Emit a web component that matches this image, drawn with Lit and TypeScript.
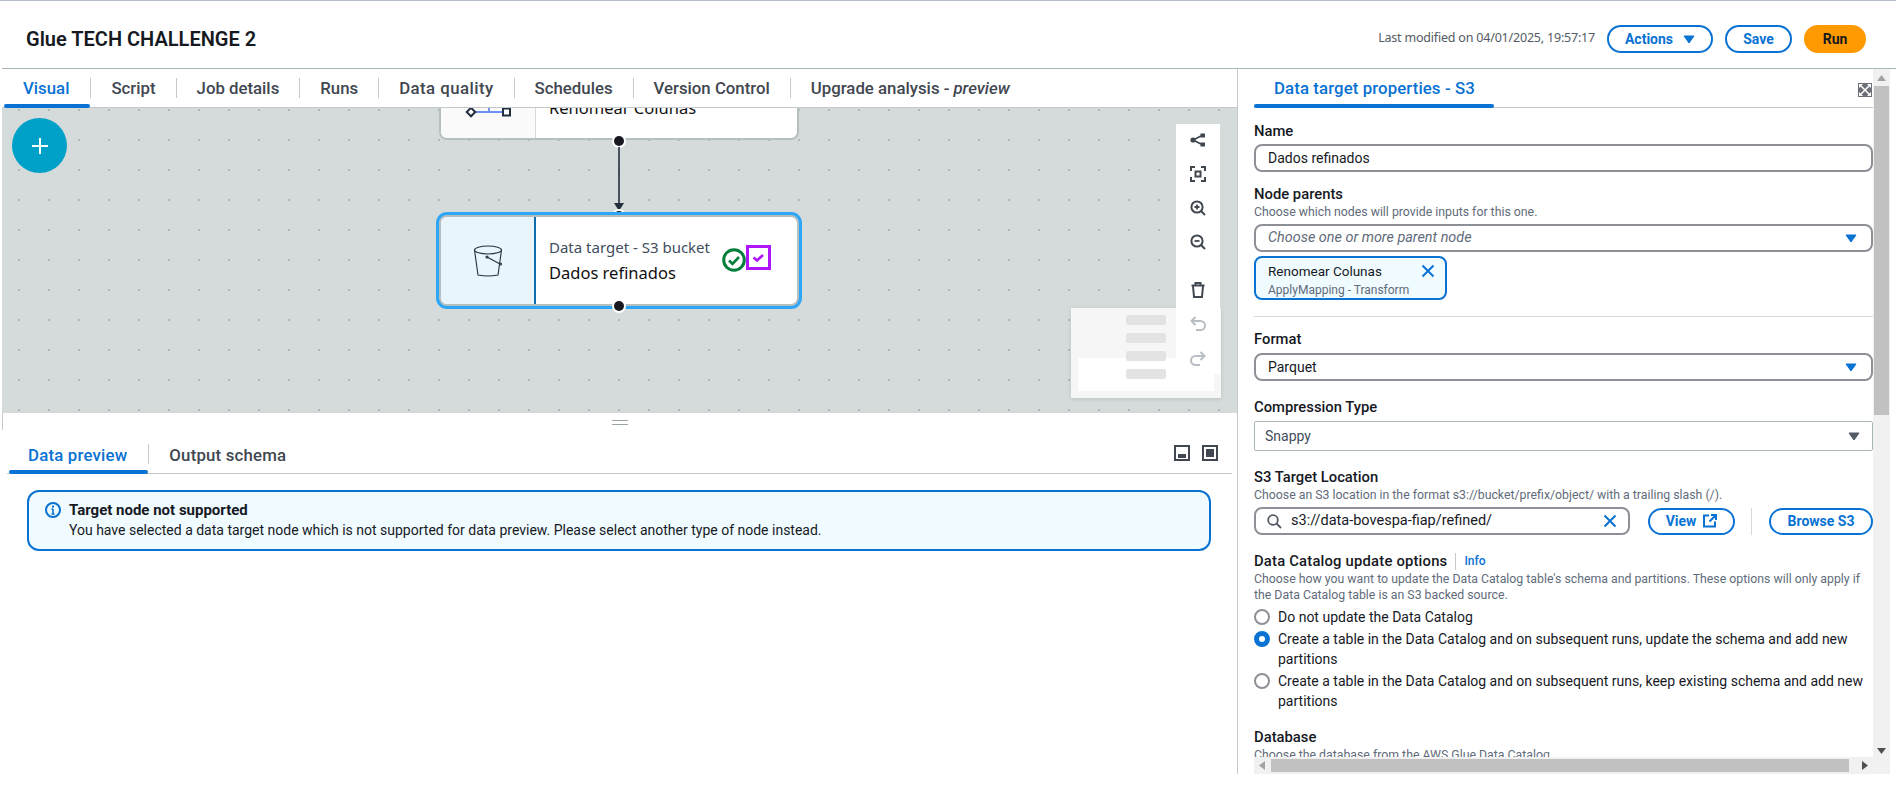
import { LitElement, css, html, svg } from "lit";
import { customElement } from "lit/decorators.js";

const caret = (color: string) => html`<svg class="caret" width="12" height="9" viewBox="0 0 12 9"><path d="M1 1h10L6 8z" fill=${color} stroke=${color} stroke-linejoin="round"/></svg>`;
const cross = (size = 14) => html`<svg width=${size} height=${size} viewBox="0 0 14 14"><path d="M1.5 1.5l11 11M12.5 1.5l-11 11" stroke="#0972d3" stroke-width="2" fill="none"/></svg>`;

const toolIcons = [
  svg`<circle cx="3" cy="8" r="2.6" fill="#414750"/><rect x="10.500" y="1.500" width="4.500" height="4" fill="#414750"/><rect x="10.500" y="10.500" width="4.500" height="4" fill="#414750"/><path d="M3 8l9-4.500M3 8l9 4.500" stroke="#414750" stroke-width="1.800"/>`,
  svg`<path d="M1 5V1h4M11 1h4v4M15 11v4h-4M5 15H1v-4" fill="none" stroke="#414750" stroke-width="2"/><rect x="5.500" y="5.500" width="5" height="5" fill="none" stroke="#414750" stroke-width="2"/>`,
  svg`<circle cx="7" cy="7" r="5.600" fill="none" stroke="#414750" stroke-width="2"/><path d="M11 11l4 4" stroke="#414750" stroke-width="2"/><path d="M4.500 7h5M7 4.500v5" stroke="#414750" stroke-width="1.800"/>`,
  svg`<circle cx="7" cy="7" r="5.600" fill="none" stroke="#414750" stroke-width="2"/><path d="M11 11l4 4" stroke="#414750" stroke-width="2"/><path d="M4.500 7h5" stroke="#414750" stroke-width="1.800"/>`,
  svg`<path d="M1.500 3.500h13M5.500 3V1h5v2M3 4l1 11h8l1-11" fill="none" stroke="#414750" stroke-width="2"/>`,
  svg`<path d="M5.500 1L1.500 5l4 4M2 5h8.500a4 4 0 0 1 0 9H6" fill="none" stroke="#b9bec4" stroke-width="2"/>`,
  svg`<path d="M10.500 2l4 4-4 4M14 6H5.500a4 4 0 0 0 0 9H10" fill="none" stroke="#b9bec4" stroke-width="2"/>`,
];

@customElement("app-root")
export class AppRoot extends LitElement {
  static styles = css`
    :host {
      display: block;
      width: 1896px;
      height: 792px;
      overflow: hidden;
      background: #fff;
      color: #16191f;
      font-family: Roboto, sans-serif;
      font-size: 14px;
      line-height: 20px;
    }
    * {
      box-sizing: border-box;
    }
    .page {
      height: 792px;
      border-top: 1px solid #b6bec9;
      padding-left: 2px;
      display: flex;
      flex-direction: column;
    }
    .header {
      height: 68px;
      flex: none;
      border-bottom: 1px solid #aab7b8;
      display: flex;
      align-items: center;
      padding: 9px 30px 0 24px;
    }
    .title {
      font-size: 20px;
      font-weight: 600;
      flex: 1;
    }
    .modified {
      font-family: "Noto Sans", sans-serif;
      font-size: 12.500px;
      letter-spacing: -0.2px;
      color: #545b64;
      margin: -3px 12px 0 0;
    }
    .btn {
      display: inline-flex;
      align-items: center;
      justify-content: center;
      gap: 10px;
      height: 28px;
      border: 2px solid #0972d3;
      border-radius: 14px;
      background: #fff;
      color: #0972d3;
      font-weight: 700;
      font-size: 14px;
    }
    .btn-actions {
      width: 106px;
    }
    .btn-save {
      width: 67px;
      margin-left: 12px;
    }
    .btn-run {
      width: 62px;
      margin-left: 12px;
      background: #ff9900;
      border-color: #ff9900;
      color: #16191f;
    }
    .main {
      flex: 1;
      display: flex;
      min-height: 0;
    }
    .left {
      width: 1235px;
      flex: none;
      display: flex;
      flex-direction: column;
    }
    .tabs {
      display: flex;
      flex: none;
      height: 39px;
      border-bottom: 1px solid #c4c9cc;
      font-weight: 500;
      font-size: 16.800px;
      color: #414750;
    }
    .tab {
      position: relative;
      height: 38px;
      padding: 0 20px 0 21px;
      display: flex;
      align-items: center;
      white-space: nowrap;
    }
    .tab:first-child {
      padding-right: 21px;
    }
    .tab.spaced {
      letter-spacing: 0.45px;
    }
    .tab i {
      font-weight: 500;
      margin-left: 4px;
    }
    .tab + .tab::before {
      content: "";
      position: absolute;
      left: 0;
      top: 9px;
      height: 20px;
      width: 1px;
      background: #c4c9cc;
    }
    .tab.active {
      color: #0972d3;
    }
    .tab.active::after {
      content: "";
      position: absolute;
      left: 2px;
      right: 0;
      bottom: -1px;
      height: 4px;
      border-radius: 2px;
      background: #0972d3;
    }
    .canvas {
      position: relative;
      height: 305px;
      flex: none;
      overflow: hidden;
      background-color: #d5dbdb;
      background-image: radial-gradient(circle, #aeb8b8 0.7px, transparent 1px);
      background-size: 30px 30px;
      background-position: 2px -13px;
    }
    .fab {
      position: absolute;
      left: 10px;
      top: 10px;
      width: 55px;
      height: 55px;
      border-radius: 50%;
      background: #00a1c9;
      display: flex;
      align-items: center;
      justify-content: center;
    }
    .node {
      position: absolute;
      left: 437px;
      width: 360px;
      height: 91px;
      display: flex;
      background: #fff;
      border: 2px solid #b5bfc0;
      border-radius: 8px;
      overflow: hidden;
      font-family: "Noto Sans", sans-serif;
    }
    .node.upper {
      top: -59px;
    }
    .node.selected {
      top: 107px;
      box-shadow: 0 0 0 3px #2ea6f8;
      overflow: visible;
    }
    .node-icon {
      width: 95px;
      flex: none;
      background: #fafafa;
      border-right: 1px solid #d5dbdb;
      position: relative;
    }
    .selected .node-icon {
      background: #e8f5fd;
      border-right: 2px solid #0f6cb0;
      border-radius: 6px 0 0 6px;
      display: flex;
      align-items: center;
      justify-content: center;
    }
    .node-body {
      padding: 20px 0 0 13px;
      white-space: nowrap;
    }
    .node-kind {
      font-size: 15px;
      color: #414d5c;
      line-height: 20px;
    }
    .node-name {
      font-size: 16.500px;
      line-height: 26px;
      margin-top: 3px;
      color: #111;
    }
    .upper .node-name {
      margin-top: 24px;
    }
    .badges {
      position: absolute;
      left: 281px;
      top: 31px;
      display: flex;
    }
    .port {
      position: absolute;
      left: 612px;
      width: 10px;
      height: 10px;
      border-radius: 50%;
      background: #16191f;
      box-shadow: 0 0 0 2px #fff;
    }
    .edge {
      position: absolute;
      left: 609px;
      top: 39px;
      width: 16px;
      height: 66px;
    }
    .toolbar {
      position: absolute;
      left: 1174px;
      top: 16px;
      width: 44px;
      height: 250px;
      background: #fff;
      padding-top: 8px;
      display: flex;
      flex-direction: column;
      align-items: center;
      z-index: 1;
    }
    .toolbar svg {
      display: block;
      flex: none;
      margin-bottom: 18px;
    }
    .toolbar svg:nth-child(5) {
      margin-top: 14px;
    }
    .minimap {
      position: absolute;
      left: 1069px;
      top: 200px;
      width: 150px;
      height: 90px;
      background: #f6f6f6;
      box-shadow: 0 1px 4px rgba(0, 0, 0, 0.12);
    }
    .minimap .view {
      position: absolute;
      left: 7px;
      right: 7px;
      top: 50px;
      bottom: 7px;
      background: #fff;
    }
    .minimap .bars {
      position: absolute;
      left: 55px;
      top: 7px;
      display: flex;
      flex-direction: column;
      gap: 8px;
    }
    .minimap .bars span {
      width: 40px;
      height: 10px;
      border-radius: 2px;
      background: #e3e3e3;
    }
    .lower {
      flex: 1;
      position: relative;
      padding: 24px 5px 0;
    }
    .lower::before {
      content: "";
      position: absolute;
      left: 0;
      top: 0;
      width: 1px;
      height: 17px;
      background: #c4c9cc;
    }
    .handle-h {
      position: absolute;
      left: 610px;
      top: 7px;
      width: 16px;
      height: 5px;
      border-top: 1px solid #9aa5a5;
      border-bottom: 1px solid #9aa5a5;
    }
    .lower-tabs {
      height: 37px;
      position: relative;
      letter-spacing: 0.2px;
    }
    .lower-tabs .tab {
      height: 36px;
    }
    .lower-tabs .tab + .tab::before {
      top: 7px;
    }
    .lower-tabs .tab.active::after {
      left: 2px;
    }
    .view-icons {
      margin-left: auto;
      display: flex;
      gap: 12px;
      align-items: center;
      padding: 0 14px 4px 0;
    }
    .alert {
      margin: 16px 21px 0 20px;
      height: 61px;
      border: 2px solid #0972d3;
      border-radius: 12px;
      background: #f0fbff;
      padding: 8px 16px 0 16px;
      display: flex;
      gap: 8px;
    }
    .alert svg {
      flex: none;
      margin-top: 2px;
    }
    .alert b {
      font-size: 15px;
      font-weight: 700;
      display: block;
    }
    .right {
      flex: none;
      width: 659px;
      height: 705px;
      border-left: 1px solid #c4c9cc;
      padding-right: 6px;
      display: grid;
      grid-template-columns: 1fr 17px;
      grid-template-rows: 688px 17px;
      align-content: start;
      min-width: 0;
    }
    .props {
      min-width: 0;
      overflow: hidden;
      padding-left: 16px;
    }
    .props-tabs {
      height: 39px;
      border-bottom: 1px solid #c4c9cc;
      display: flex;
      justify-content: space-between;
      font-weight: 500;
      font-size: 16.800px;
    }
    .props-tabs .tab {
      padding: 0 19px 0 20px;
      letter-spacing: 0.1px;
      color: #0972d3;
    }
    .props-tabs .tab.active::after {
      left: 0;
    }
    .expand {
      margin: 14px 1px 0 0;
    }
    .form {
      padding-top: 14px;
      height: 649px;
      overflow: hidden;
    }
    .field {
      margin-top: 13px;
    }
    .field:first-child {
      margin-top: 0;
    }
    .field.wide {
      margin-top: 17px;
    }
    .label {
      font-size: 14.800px;
      font-weight: 500;
      line-height: 18px;
      display: flex;
      align-items: center;
    }
    .label .long {
      letter-spacing: 0.2px;
    }
    .info {
      color: #0972d3;
      font-size: 12px;
      border-left: 1px solid #c4c9cc;
      margin-left: 8px;
      padding-left: 8px;
      height: 17px;
      line-height: 17px;
    }
    .desc {
      font-size: 12.300px;
      line-height: 16px;
      color: #5f6b7a;
      margin-top: 1px;
      padding-right: 8px;
    }
    .control {
      margin-top: 4px;
      height: 28px;
      border: 2px solid #8d9096;
      border-radius: 8px;
      padding: 0 14px 0 12px;
      display: flex;
      align-items: center;
      justify-content: space-between;
    }
    .control i {
      color: #5f6b7a;
      font-size: 14.400px;
    }
    .control.plain {
      margin-top: 5px;
      height: 30px;
      border: 1px solid #aab7b8;
      border-radius: 2px;
      padding: 0 12px 0 10px;
      color: #414d5c;
    }
    .token {
      margin-top: 4px;
      width: 193px;
      height: 44px;
      border: 2px solid #0972d3;
      border-radius: 8px;
      background: #f0fbff;
      padding: 3px 10px 0 12px;
      display: grid;
      grid-template-columns: 1fr auto;
      line-height: 20px;
    }
    .token span {
      font-size: 13.500px;
    }
    .token small {
      font-size: 12px;
      line-height: 16px;
      color: #5f6b7a;
      grid-column: 1 / 3;
    }
    .token svg {
      margin-top: 3px;
    }
    .divider {
      height: 1px;
      background: #d5dbdb;
      margin-top: 16px;
    }
    .s3-row {
      margin-top: 4px;
      display: flex;
      align-items: center;
    }
    .s3-row .control {
      margin-top: 0;
      width: 376px;
      padding: 0 11px 0 11px;
    }
    .s3-row .value {
      flex: 1;
      margin-left: 9px;
      font-size: 14.500px;
    }
    .s3-row .btn {
      height: 27px;
      gap: 7px;
    }
    .btn-view {
      width: 87px;
      margin-left: 18px;
    }
    .vsep {
      width: 1px;
      height: 27px;
      background: #d5dbdb;
      margin: 0 17px 0 16px;
    }
    .btn-browse {
      width: 104px;
    }
    .radios {
      margin-top: 4px;
      display: flex;
      flex-direction: column;
      gap: 2px;
    }
    .radio {
      display: flex;
      gap: 8px;
    }
    .dot {
      width: 16px;
      height: 16px;
      flex: none;
      margin-top: 2px;
      border-radius: 50%;
      border: 2px solid #8d9096;
    }
    .dot.on {
      border: 5px solid #0972d3;
    }
    .vscroll {
      grid-column: 2;
      grid-row: 1 / 3;
      background: #f1f1f1;
      display: flex;
      flex-direction: column;
      align-items: center;
      justify-content: space-between;
      padding: 6px 0 20px;
      position: relative;
    }
    .vscroll .thumb {
      position: absolute;
      left: 1px;
      top: 17px;
      width: 15px;
      height: 329px;
      background: #c1c1c1;
    }
    .hscroll {
      background: #f1f1f1;
      margin-left: 16px;
      display: flex;
      align-items: center;
      justify-content: space-between;
      padding: 0 5px 0 5px;
      position: relative;
    }
    .hscroll .thumb {
      position: absolute;
      left: 17px;
      top: 2px;
      width: 578px;
      height: 13px;
      background: #c1c1c1;
    }
  `;

  render() {
    return html`<div class="page">
      <div class="header">
        <div class="title">Glue TECH CHALLENGE 2</div>
        <div class="modified">Last modified on 04/01/2025, 19:57:17</div>
        <div class="btn btn-actions">Actions ${caret("#0972d3")}</div>
        <div class="btn btn-save">Save</div>
        <div class="btn btn-run">Run</div>
      </div>
      <div class="main">
        <div class="left">
          <div class="tabs">
            <div class="tab active">Visual</div>
            <div class="tab">Script</div>
            <div class="tab">Job details</div>
            <div class="tab">Runs</div>
            <div class="tab spaced">Data quality</div>
            <div class="tab">Schedules</div>
            <div class="tab">Version Control</div>
            <div class="tab">Upgrade analysis - <i>preview</i></div>
          </div>
          ${this.renderCanvas()}
          <div class="lower">
            <div class="handle-h"></div>
            <div class="tabs lower-tabs">
              <div class="tab active">Data preview</div>
              <div class="tab">Output schema</div>
              <div class="view-icons">
                <svg width="16" height="16" viewBox="0 0 16 16"><rect x="1" y="1" width="14" height="14" fill="none" stroke="#414750" stroke-width="2"/><rect x="4" y="9" width="8" height="4" fill="#414750"/></svg>
                <svg width="16" height="16" viewBox="0 0 16 16"><rect x="1" y="1" width="14" height="14" fill="none" stroke="#414750" stroke-width="2"/><rect x="4" y="4" width="8" height="8" fill="#414750"/></svg>
              </div>
            </div>
            <div class="alert">
              <svg width="16" height="16" viewBox="0 0 16 16"><circle cx="8" cy="8" r="7" fill="none" stroke="#0972d3" stroke-width="2"/><path d="M8 7v5M6.500 12h3M6.500 7H8" fill="none" stroke="#0972d3" stroke-width="1.600"/><rect x="7" y="3.600" width="2" height="2" fill="#0972d3"/></svg>
              <div>
                <b>Target node not supported</b>
                You have selected a data target node which is not supported for data preview. Please select another type of node instead.
              </div>
            </div>
          </div>
        </div>
        ${this.renderProps()}
      </div>
    </div>`;
  }

  renderCanvas() {
    return html`<div class="canvas">
      <div class="fab">
        <svg width="18" height="18" viewBox="0 0 18 18"><path d="M9 1v16M1 9h16" stroke="#fff" stroke-width="2"/></svg>
      </div>
      <div class="node upper">
        <div class="node-icon">
          <svg width="94" height="87" viewBox="0 0 94 87">
            <path d="M30 61h36M48 56v5" stroke="#6f8ff5" stroke-width="2" fill="none"/>
            <rect x="27" y="58" width="6" height="6" transform="rotate(45 30 61)" fill="#fff" stroke="#232f3e" stroke-width="2"/>
            <rect x="62" y="57.500" width="7" height="7" fill="#fff" stroke="#232f3e" stroke-width="2"/>
          </svg>
        </div>
        <div class="node-body"><div class="node-name">Renomear Colunas</div></div>
      </div>
      <div class="port" style="top:28px"></div>
      <svg class="edge" viewBox="0 0 16 66">
        <path d="M8 0v58" stroke="#232f3e" stroke-width="1.600"/>
        <path d="M3 56h10l-5 8z" fill="#232f3e"/>
      </svg>
      <div class="port" style="top:103px"></div>
      <div class="node selected">
        <div class="node-icon">
          <svg width="30" height="33" viewBox="0 0 30 33" fill="none" stroke="#232f3e" stroke-width="1.100">
            <ellipse cx="15" cy="6" rx="13.500" ry="4"/>
            <path d="M1.500 6l3.500 25q10 2 20 0l3.500-25"/>
            <path d="M14 13l13 7"/>
            <circle cx="14" cy="13" r="1"/>
            <circle cx="27.500" cy="20" r="1"/>
          </svg>
        </div>
        <div class="node-body">
          <div class="node-kind">Data target - S3 bucket</div>
          <div class="node-name">Dados refinados</div>
        </div>
        <div class="badges">
          <svg width="24" height="24" viewBox="0 0 24 24" fill="none"><circle cx="12" cy="12" r="10.300" stroke="#037f3b" stroke-width="3"/><path d="M7 12.500l3.500 3.500 6.500-7" stroke="#037f3b" stroke-width="2.600"/></svg>
          <svg width="25" height="25" viewBox="0 0 25 25" fill="none" style="margin-top:-3px"><rect x="1.500" y="1.500" width="22" height="22" stroke="#b014ff" stroke-width="3"/><path d="M7.500 12.500l3.500 3 6-5.500" stroke="#b014ff" stroke-width="2.600"/></svg>
        </div>
      </div>
      <div class="port" style="top:193px"></div>
      <div class="minimap">
        <div class="view"></div>
        <div class="bars"><span></span><span></span><span></span><span></span></div>
      </div>
      <div class="toolbar">
        ${toolIcons.map((icon) => html`<svg width="16" height="16" viewBox="0 0 16 16">${icon}</svg>`)}
      </div>
    </div>`;
  }

  renderProps() {
    return html`<div class="right">
      <div class="props">
        <div class="props-tabs">
          <div class="tab active">Data target properties - S3</div>
          <svg class="expand" width="14" height="14" viewBox="0 0 14 14"><rect width="14" height="14" fill="#6b7078"/><path d="M2 2l10 10M12 2L2 12" stroke="#fff" stroke-width="1.500" fill="none"/><path d="M1 1h4L1 5zM13 1H9l4 4zM1 13h4l-4-4zM13 13H9l4-4z" fill="#fff"/></svg>
        </div>
        <div class="form">
          <div class="field">
            <div class="label">Name</div>
            <div class="control">Dados refinados</div>
          </div>
          <div class="field">
            <div class="label">Node parents</div>
            <div class="desc">Choose which nodes will provide inputs for this one.</div>
            <div class="control"><i>Choose one or more parent node</i>${caret("#0972d3")}</div>
            <div class="token">
              <span>Renomear Colunas</span>${cross()}
              <small>ApplyMapping - Transform</small>
            </div>
          </div>
          <div class="divider"></div>
          <div class="field">
            <div class="label">Format</div>
            <div class="control" style="margin-top:5px">Parquet ${caret("#0972d3")}</div>
          </div>
          <div class="field wide">
            <div class="label">Compression Type</div>
            <div class="control plain">Snappy ${caret("#545b64")}</div>
          </div>
          <div class="field wide">
            <div class="label">S3 Target Location</div>
            <div class="desc">Choose an S3 location in the format s3://bucket/prefix/object/ with a trailing slash (/).</div>
            <div class="s3-row">
              <div class="control">
                <svg width="15" height="15" viewBox="0 0 15 15" fill="none" stroke="#545b64" stroke-width="1.800"><circle cx="6" cy="6" r="4.800"/><path d="M9.500 9.500l4.500 4.500"/></svg>
                <span class="value">s3://data-bovespa-fiap/refined/</span>
                ${cross()}
              </div>
              <div class="btn btn-view">View
                <svg width="14" height="14" viewBox="0 0 14 14" fill="none" stroke="#0972d3" stroke-width="2"><path d="M6 1.500H1v11h11v-5M8 1h5v5M13 1L6.500 7.500"/></svg>
              </div>
              <div class="vsep"></div>
              <div class="btn btn-browse">Browse S3</div>
            </div>
          </div>
          <div class="field wide">
            <div class="label"><span class="long">Data Catalog update options</span> <span class="info">Info</span></div>
            <div class="desc">Choose how you want to update the Data Catalog table's schema and partitions. These options will only apply if the Data Catalog table is an S3 backed source.</div>
            <div class="radios">
              <div class="radio"><span class="dot"></span>Do not update the Data Catalog</div>
              <div class="radio"><span class="dot on"></span><span>Create a table in the Data Catalog and on subsequent runs, update the schema and add new partitions</span></div>
              <div class="radio"><span class="dot"></span><span>Create a table in the Data Catalog and on subsequent runs, keep existing schema and add new partitions</span></div>
            </div>
          </div>
          <div class="field wide">
            <div class="label">Database</div>
            <div class="desc">Choose the database from the AWS Glue Data Catalog.</div>
          </div>
        </div>
      </div>
      <div class="vscroll">
        <svg width="9" height="6" viewBox="0 0 9 6"><path d="M4.500 0L9 6H0z" fill="#a3a3a3"/></svg>
        <div class="thumb"></div>
        <svg width="9" height="6" viewBox="0 0 9 6"><path d="M0 0h9L4.500 6z" fill="#505050"/></svg>
      </div>
      <div class="hscroll">
        <svg width="6" height="9" viewBox="0 0 6 9"><path d="M6 0v9L0 4.500z" fill="#a3a3a3"/></svg>
        <div class="thumb"></div>
        <svg width="6" height="9" viewBox="0 0 6 9"><path d="M0 0v9l6-4.500z" fill="#505050"/></svg>
      </div>
    </div>`;
  }
}
